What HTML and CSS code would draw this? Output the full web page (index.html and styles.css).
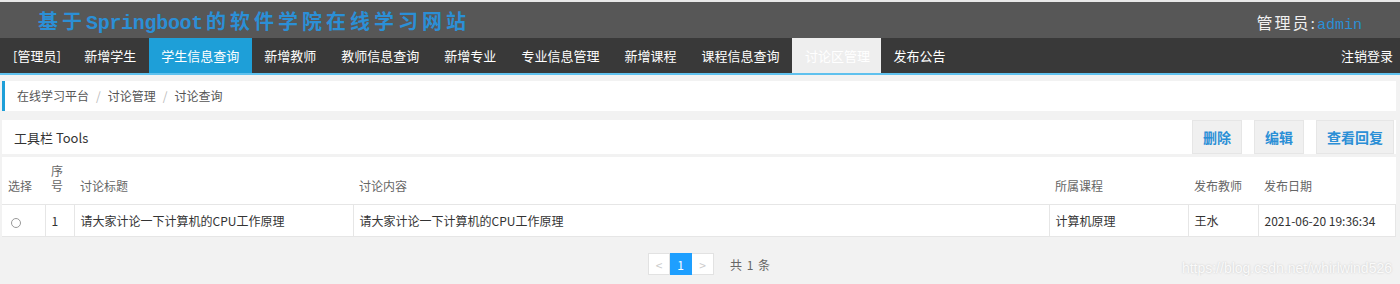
FILE: index.html
```html
<!DOCTYPE html>
<html lang="zh-CN">
<head>
  <meta charset="UTF-8" />
  <meta name="viewport" content="width=device-width, initial-scale=1.0"/>
  <title>讨论查询</title>
  <link rel="stylesheet" href="styles.css">
</head>
<body>
  <!-- 顶部标题栏 -->
  <div class="topo">
    <h1 class="titulo">基于<span class="latino">Springboot</span>的软件学院在线学习网站</h1>
    <div class="usuario">管理员:<span class="admin">admin</span></div>
  </div>

  <!-- 导航菜单 -->
  <ul class="menu">
    <li>[管理员]</li>
    <li>新增学生</li>
    <li class="ativo">学生信息查询</li>
    <li>新增教师</li>
    <li>教师信息查询</li>
    <li>新增专业</li>
    <li>专业信息管理</li>
    <li>新增课程</li>
    <li>课程信息查询</li>
    <li class="atual">讨论区管理</li>
    <li>发布公告</li>
    <li class="sair">注销登录</li>
  </ul>

  <div class="conteudo">
    <!-- 面包屑 -->
    <div class="migalhas">
      <span>在线学习平台</span><span class="sep">/</span><span>讨论管理</span><span class="sep">/</span><span>讨论查询</span>
    </div>

    <!-- 工具栏 -->
    <div class="ferramentas">
      <span>工具栏 Tools</span>
      <div class="botoes">
        <button>删除</button>
        <button>编辑</button>
        <button class="largo">查看回复</button>
      </div>
    </div>

    <!-- 讨论列表 -->
    <div class="painel">
      <table class="tabela">
        <colgroup>
          <col style="width:43px">
          <col style="width:29px">
          <col style="width:279px">
          <col style="width:696px">
          <col style="width:139px">
          <col style="width:70px">
          <col>
        </colgroup>
        <thead>
          <tr>
            <th>选择</th>
            <th>序<br>号</th>
            <th>讨论标题</th>
            <th>讨论内容</th>
            <th>所属课程</th>
            <th>发布教师</th>
            <th>发布日期</th>
          </tr>
        </thead>
        <tbody>
          <tr>
            <td><span class="radio"></span></td>
            <td>1</td>
            <td>请大家计论一下计算机的CPU工作原理</td>
            <td>请大家计论一下计算机的CPU工作原理</td>
            <td>计算机原理</td>
            <td>王水</td>
            <td>2021-06-20 19:36:34</td>
          </tr>
        </tbody>
      </table>
    </div>

    <!-- 分页 -->
    <div class="paginacao">
      <span class="pag">&lt;</span><span class="pag atual-pag">1</span><span class="pag">&gt;</span>
      <span class="total">共 1 条</span>
    </div>
    <div class="marca">https://blog.csdn.net/whirlwind526</div>
  </div>
</body>
</html>
```

FILE: styles.css
```css
/* Estilo geral */
body {
  margin: 0;
  font-family: "Noto Sans CJK SC", "Noto Sans", sans-serif;
  background-color: #f2f2f2;
  color: #333;
  font-size: 12px;
}

/* Topo */
.topo {
  border-top: 2px solid #e8e8e8;
  background-color: #575757;
  height: 36px;
  display: flex;
  align-items: center;
  justify-content: space-between;
  padding: 0 38px;
}

.titulo {
  margin: 0;
  font-family: "Liberation Mono", "Noto Sans CJK SC", monospace;
  font-size: 20px;
  font-weight: bold;
  color: #2b8fd6;
  letter-spacing: 4px;
}

.titulo .latino {
  letter-spacing: -0.3px;
  margin-right: 3px;
}

.usuario {
  font-family: "Liberation Serif", "Noto Sans CJK SC", serif;
  font-size: 16px;
  color: #f0f0f0;
  letter-spacing: 2px;
  padding-top: 4px;
}

.usuario .admin {
  font-family: "Liberation Mono", monospace;
  font-size: 15px;
  color: #2b8fd6;
  letter-spacing: 0;
}

/* Menu */
.menu {
  list-style: none;
  margin: 0;
  padding: 0;
  display: flex;
  height: 35px;
  background-color: #393939;
  border-bottom: 2px solid #5fc1ee;
}

.menu li {
  padding: 0 12.5px;
  line-height: 35px;
  font-size: 13px;
  color: #fff;
}

.menu li:first-child {
  padding-left: 13px;
  padding-right: 11px;
}

.menu li.ativo {
  background-color: #1e9fd8;
}

.menu li.atual {
  background-color: #eeeeee;
  color: #fff;
  padding: 0 11px 0 13px;
}

.menu li.sair {
  margin-left: auto;
  padding-right: 7px;
}

.conteudo {
  padding: 6px 4px 0 2px;
}

/* Migalhas */
.migalhas {
  background: #fff;
  border-left: 3px solid #1e9fd8;
  height: 30px;
  line-height: 30px;
  padding-left: 12px;
  color: #555;
  font-size: 12px;
}

.migalhas .sep {
  color: #bbb;
  margin: 0 7px;
}

/* Ferramentas */
.ferramentas {
  margin-top: 9px;
  background: #fff;
  height: 34px;
  display: flex;
  align-items: center;
  justify-content: space-between;
  padding-left: 12px;
  font-size: 13px;
  color: #333;
}

.botoes {
  display: flex;
  gap: 12px;
  height: 34px;
  margin-right: 2px;
}

.botoes button {
  width: 50px;
  height: 34px;
  border: 1px solid #e6e6e6;
  background-color: #f0f0f0;
  color: #2b8fd6;
  font-family: "Noto Sans CJK SC", sans-serif;
  font-size: 14px;
  font-weight: bold;
  padding: 0;
  cursor: pointer;
}

.botoes button.largo {
  width: 78px;
}

/* Tabela */
.painel {
  margin-top: 3px;
  background: #fff;
}

.tabela {
  width: 100%;
  table-layout: fixed;
  border-collapse: collapse;
}

.tabela th {
  font-weight: normal;
  text-align: left;
  color: #666;
  vertical-align: bottom;
  padding: 6px 6px 11px;
  line-height: 15px;
}

.tabela td {
  height: 31px;
  padding: 0 6px;
  border-top: 1px solid #e6e6e6;
  border-left: 1px solid #e6e6e6;
  border-bottom: 1px solid #e6e6e6;
  color: #333;
  white-space: nowrap;
}

.tabela td:first-child {
  border-left: none;
  padding-left: 9px;
}

.tabela td:last-child {
  border-right: 1px solid #e6e6e6;
}

.radio {
  display: inline-block;
  width: 8px;
  height: 8px;
  border: 1px solid #999;
  border-radius: 50%;
  vertical-align: middle;
}

/* Paginação */
.paginacao {
  margin-top: 16px;
  display: flex;
  align-items: center;
  padding-left: 646px;
}

.pag {
  width: 22px;
  height: 22px;
  line-height: 22px;
  text-align: center;
  background: #fff;
  border: 1px solid #e2e2e2;
  color: #ccc;
  box-sizing: border-box;
}

.pag + .pag {
  border-left: none;
}

.pag.atual-pag {
  background: #1e9fff;
  border-color: #1e9fff;
  color: #fff;
}

.total {
  margin-left: 16px;
  font-size: 12px;
  color: #666;
  letter-spacing: 1px;
}

.marca {
  text-align: right;
  margin-top: -15px;
  padding-right: 4px;
  font-family: "Liberation Sans", sans-serif;
  font-size: 14px;
  color: #fafafa;
  text-shadow: 0 0 2px #c4c4c4;
}
```
